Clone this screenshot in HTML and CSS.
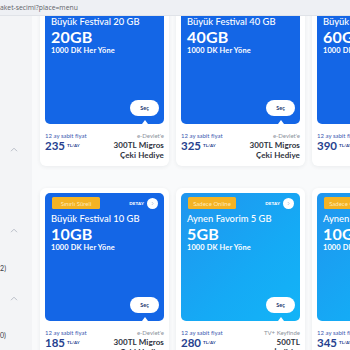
FILE: index.html
```html
<!DOCTYPE html>
<html lang="tr">
<head>
<meta charset="utf-8">
<title>Paket Seçimi</title>
<link rel="stylesheet" href="styles.css">
</head>
<body>
<div class="topbar"><span class="url">aket-secimi?place=menu</span></div>
<div class="page">
  <aside class="sidebar">
    <svg class="chev c1" width="8" height="5" viewBox="0 0 8 5"><polyline points="1,4.2 4,1.2 7,4.2" fill="none" stroke="#b9bec7" stroke-width="1"/></svg>
    <svg class="chev c2" width="8" height="5" viewBox="0 0 8 5"><polyline points="1,4.2 4,1.2 7,4.2" fill="none" stroke="#b9bec7" stroke-width="1"/></svg>
    <div class="count t1">Aylık (12)</div>
    <svg class="chev c3" width="8" height="5" viewBox="0 0 8 5"><polyline points="1,4.2 4,1.2 7,4.2" fill="none" stroke="#b9bec7" stroke-width="1"/></svg>
    <div class="count t2">Tümü (10)</div>
  </aside>
  <main class="main">
    <div class="grid">
      <!-- Row 1 -->
      <div class="card">
        <div class="blue">
          <div class="top-row"></div>
          <div class="title">Büyük Festival 20 GB</div>
          <div class="gb">20GB</div>
          <div class="dk">1000 DK Her Yöne</div>
          <div class="sec">Seç</div>
        </div>
        <div class="info">
          <div class="left">
            <div class="lbl">12 ay sabit fiyat</div>
            <div class="price"><span class="amt">235</span><span class="unit">TL/AY</span></div>
          </div>
          <div class="right">
            <div class="gov">e-Devlet'e</div>
            <div class="gift">300TL Migros</div>
            <div class="gift">Çeki Hediye</div>
          </div>
        </div>
      </div>
      <div class="card">
        <div class="blue">
          <div class="top-row"></div>
          <div class="title">Büyük Festival 40 GB</div>
          <div class="gb">40GB</div>
          <div class="dk">1000 DK Her Yöne</div>
          <div class="sec">Seç</div>
        </div>
        <div class="info">
          <div class="left">
            <div class="lbl">12 ay sabit fiyat</div>
            <div class="price"><span class="amt">325</span><span class="unit">TL/AY</span></div>
          </div>
          <div class="right">
            <div class="gov">e-Devlet'e</div>
            <div class="gift">300TL Migros</div>
            <div class="gift">Çeki Hediye</div>
          </div>
        </div>
      </div>
      <div class="card">
        <div class="blue">
          <div class="top-row"></div>
          <div class="title">Büyük Festival 60 GB</div>
          <div class="gb">60GB</div>
          <div class="dk">1000 DK Her Yöne</div>
          <div class="sec">Seç</div>
        </div>
        <div class="info">
          <div class="left">
            <div class="lbl">12 ay sabit fiyat</div>
            <div class="price"><span class="amt">390</span><span class="unit">TL/AY</span></div>
          </div>
          <div class="right">
            <div class="gov">e-Devlet'e</div>
            <div class="gift">300TL Migros</div>
            <div class="gift">Çeki Hediye</div>
          </div>
        </div>
      </div>
      <!-- Row 2 -->
      <div class="card">
        <div class="blue">
          <div class="top-row">
            <span class="badge">Sınırlı Süreli</span>
            <span class="detay">DETAY <span class="circle"><svg width="5" height="5" viewBox="0 0 5 5"><polyline points="1.8,1 3.2,2.5 1.8,4" fill="none" stroke="#b9c3d6" stroke-width="0.8"/></svg></span></span>
          </div>
          <div class="title">Büyük Festival 10 GB</div>
          <div class="gb">10GB</div>
          <div class="dk">1000 DK Her Yöne</div>
          <div class="sec">Seç</div>
        </div>
        <div class="info">
          <div class="left">
            <div class="lbl">12 ay sabit fiyat</div>
            <div class="price"><span class="amt">185</span><span class="unit">TL/AY</span></div>
          </div>
          <div class="right">
            <div class="gov">e-Devlet'e</div>
            <div class="gift">300TL Migros</div>
            <div class="gift">Çeki Hediye</div>
          </div>
        </div>
      </div>
      <div class="card">
        <div class="blue sky">
          <div class="top-row">
            <span class="badge">Sadece Online</span>
            <span class="detay">DETAY <span class="circle"><svg width="5" height="5" viewBox="0 0 5 5"><polyline points="1.8,1 3.2,2.5 1.8,4" fill="none" stroke="#b9c3d6" stroke-width="0.8"/></svg></span></span>
          </div>
          <div class="title">Aynen Favorim 5 GB</div>
          <div class="gb">5GB</div>
          <div class="dk">1000 DK Her Yöne</div>
          <div class="sec">Seç</div>
        </div>
        <div class="info">
          <div class="left">
            <div class="lbl">12 ay sabit fiyat</div>
            <div class="price"><span class="amt">280</span><span class="unit">TL/AY</span></div>
          </div>
          <div class="right">
            <div class="gov">TV+ Keyfinde</div>
            <div class="gift">500TL</div>
            <div class="gift">İndirim</div>
          </div>
        </div>
      </div>
      <div class="card">
        <div class="blue sky">
          <div class="top-row">
            <span class="badge">Sadece Online</span>
            <span class="detay">DETAY <span class="circle"><svg width="5" height="5" viewBox="0 0 5 5"><polyline points="1.8,1 3.2,2.5 1.8,4" fill="none" stroke="#b9c3d6" stroke-width="0.8"/></svg></span></span>
          </div>
          <div class="title">Aynen Favorim 10 GB</div>
          <div class="gb">10GB</div>
          <div class="dk">1000 DK Her Yöne</div>
          <div class="sec">Seç</div>
        </div>
        <div class="info">
          <div class="left">
            <div class="lbl">12 ay sabit fiyat</div>
            <div class="price"><span class="amt">345</span><span class="unit">TL/AY</span></div>
          </div>
          <div class="right">
            <div class="gov">TV+ Keyfinde</div>
            <div class="gift">500TL</div>
            <div class="gift">İndirim</div>
          </div>
        </div>
      </div>
    </div>
  </main>
</div>
</body>
</html>
```
FILE: styles.css
```css
html, body {
  margin: 0;
  padding: 0;
}
body {
  width: 350px;
  height: 350px;
  overflow: hidden;
  background: #f9fafb;
  font-family: Lato, "Open Sans", sans-serif;
}
.topbar {
  height: 15px;
  background: #eef0f4;
  border-bottom: 1px solid #e0e3e8;
  display: flex;
  align-items: center;
  position: relative;
  z-index: 2;
}
.url {
  font-family: "Open Sans", sans-serif;
  font-size: 6.8px;
  color: #5f6368;
  white-space: nowrap;
}
.page {
  display: flex;
  height: 334px;
  overflow: hidden;
}
.sidebar {
  width: 32px;
  flex: none;
  background: #f3f4f6;
  display: flex;
  flex-direction: column;
  padding-top: 131px;
  box-sizing: border-box;
}
.chev {
  display: block;
  margin-left: 10px;
}
.c2 { margin-top: 76px; }
.c3 { margin-top: 23px; }
.count {
  width: 46px;
  margin-left: -40px;
  text-align: right;
  white-space: nowrap;
  font-size: 7px;
  line-height: 9px;
  color: #333842;
}
.t1 { margin-top: 31px; }
.t2 { margin-top: 30px; }
.main {
  flex: 1;
  padding-left: 8px;
  overflow: hidden;
}
.grid {
  display: grid;
  grid-template-columns: repeat(3, 129px);
  column-gap: 7px;
  row-gap: 22px;
  margin-top: -25px;
}
.card {
  background: #fff;
  border-radius: 6px;
  padding: 5px 5px 0;
  height: 175px;
  box-sizing: border-box;
  box-shadow: 0 1px 4px rgba(30, 40, 60, 0.07);
}
.blue {
  position: relative;
  height: 128px;
  box-sizing: border-box;
  border-radius: 5px;
  background: #1466e6;
  color: #fff;
  padding: 4px 6px 8px 6px;
  display: flex;
  flex-direction: column;
}
.blue.sky {
  background: linear-gradient(135deg, #2095ee 0%, #15aaf5 60%, #13b4f7 100%);
}
.blue::after {
  content: "";
  position: absolute;
  bottom: 0;
  right: 16px;
  width: 0;
  height: 0;
  border-left: 3px solid transparent;
  border-right: 3px solid transparent;
  border-bottom: 4px solid #fff;
}
.top-row {
  height: 12px;
  display: flex;
  justify-content: space-between;
  align-items: center;
}
.badge {
  background: #f4b324;
  color: #fde9b8;
  font-size: 6px;
  width: 48px;
  height: 12px;
  margin-left: 1px;
  border-radius: 1.5px;
  display: flex;
  align-items: center;
  justify-content: center;
  white-space: nowrap;
}
.detay {
  display: flex;
  align-items: center;
  gap: 3px;
  font-size: 4.5px;
  font-weight: 900;
  letter-spacing: 0.1px;
}
.circle {
  width: 11px;
  height: 11px;
  border-radius: 50%;
  background: #fff;
  display: flex;
  align-items: center;
  justify-content: center;
}
.circle svg { display: block; }
.title {
  margin-top: 3px;
  font-size: 9.4px;
  line-height: 13px;
  font-weight: 500;
  white-space: nowrap;
}
.gb {
  font-size: 16px;
  font-weight: 700;
  line-height: 18px;
  letter-spacing: 0.2px;
}
.dk {
  font-size: 7.4px;
  font-weight: 700;
  line-height: 10px;
  letter-spacing: 0.15px;
  white-space: nowrap;
}
.sec {
  margin-top: auto;
  align-self: flex-end;
  margin-right: -1px;
  width: 29px;
  height: 16px;
  border-radius: 8px;
  background: #fff;
  color: #22386f;
  font-size: 5.5px;
  font-weight: 700;
  display: flex;
  align-items: center;
  justify-content: center;
}
.info {
  display: flex;
  justify-content: space-between;
  padding-top: 8px;
}
.lbl {
  font-size: 6px;
  line-height: 8px;
  color: #3d5ab0;
  white-space: nowrap;
}
.price {
  display: flex;
  align-items: flex-start;
  color: #263f8f;
}
.amt {
  font-size: 11.5px;
  font-weight: 700;
  line-height: 12px;
}
.unit {
  font-size: 4.5px;
  font-weight: 700;
  margin-left: 2px;
  margin-top: 3px;
}
.right {
  text-align: right;
}
.gov {
  font-size: 6px;
  line-height: 8px;
  color: #8c919b;
  white-space: nowrap;
}
.gift {
  font-size: 8px;
  line-height: 10px;
  font-weight: 700;
  color: #2e3240;
  white-space: nowrap;
  letter-spacing: 0.1px;
}
```
